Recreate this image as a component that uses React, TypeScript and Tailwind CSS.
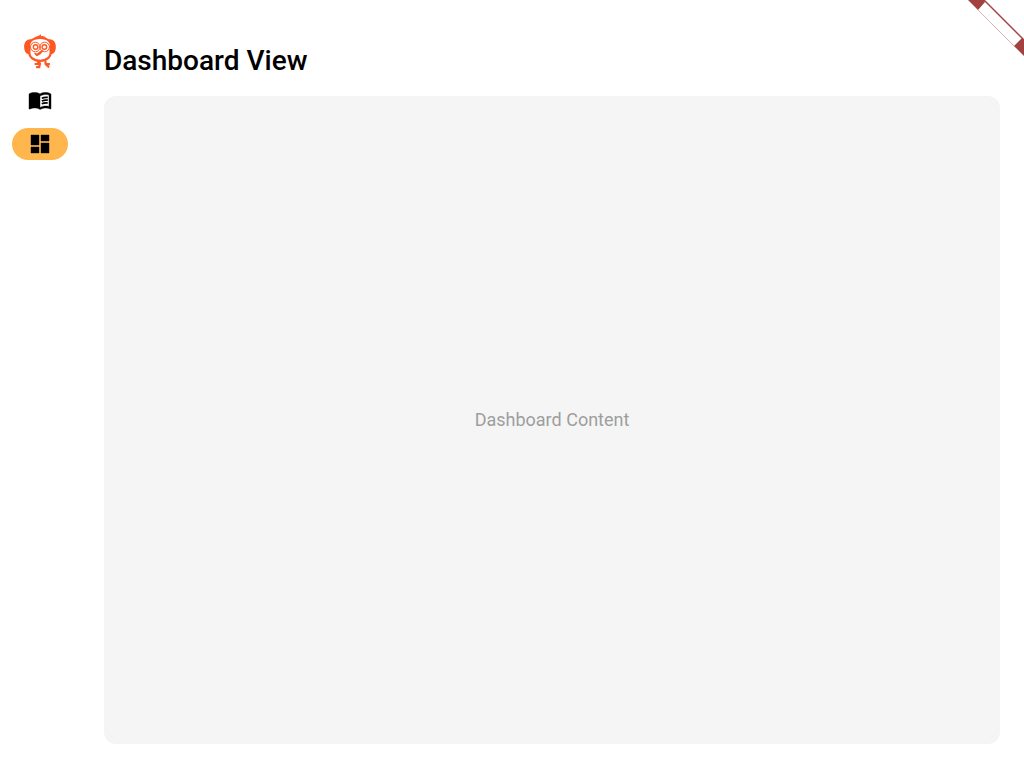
import { useState } from "react";

function Logo() {
  return (
    <svg viewBox="0 0 40 42" className="h-[42px] w-10" fill="none" stroke="#ff5722" strokeLinecap="round" strokeLinejoin="round" aria-hidden="true">
      <path d="M12 9.500C6.500 8.500 3.600 13 4.200 18C4.700 22 6.200 24.300 9.500 24.200C8.500 20 8.500 14 12 9.500Z" fill="#ff5722" stroke="none" />
      <path d="M28 9.500C33.500 8.500 36.400 13 35.800 18C35.300 22 33.800 24.300 30.500 24.200C31.500 20 31.500 14 28 9.500Z" fill="#ff5722" stroke="none" />
      <path d="M9.500 20C7.500 12 11.500 8 20 8S32.500 12 30.500 20C33.500 34.500 6.500 34.500 9.500 20Z" strokeWidth="2.200" />
      <path d="M14 8.500C15 6 18 6.800 21 4.200C21.200 5.400 21 6 20.700 6.400C23 5.600 25 6.400 26 8.500Z" fill="#ff5722" stroke="none" />
      <circle cx="15.300" cy="17" r="4.800" strokeWidth="1" />
      <circle cx="24.700" cy="17" r="4.800" strokeWidth="1" />
      <circle cx="15.600" cy="17" r="2.300" strokeWidth="1.400" />
      <circle cx="24.400" cy="17" r="2.300" strokeWidth="1.400" />
      <path d="M23.500 20C20.500 20.500 18.500 22 17.200 23.500L14 22.800C14.800 24.500 15.500 25.600 16.500 26.200C18.500 25.800 22 24 23.500 20Z" fill="#ff5722" stroke="none" />
      <path d="M18 32L20 33.500L19.200 37.200L17 37.200M19.500 34L15.500 34M25.500 31.500L25.500 34L28.500 36.800M26 34L29 34.200" strokeWidth="2.200" />
    </svg>
  );
}

function BookIcon({ className }: { className?: string }) {
  return (
    <svg viewBox="0 0 24 24" className={className} fill="currentColor" aria-hidden="true">
      <path
        fillRule="evenodd"
        stroke="currentColor"
        strokeWidth="0.400"
        d="M21 5c-1.110-.350-2.330-.500-3.500-.500-1.950 0-4.050.400-5.500 1.500-1.450-1.100-3.550-1.500-5.500-1.500S2.450 4.900 1 6v14.650c0 .250.250.500.500.500.100 0 .150-.050.250-.050C3.100 20.450 5.050 20 6.500 20c1.950 0 4.050.400 5.500 1.500 1.350-.850 3.800-1.500 5.500-1.500 1.650 0 3.350.300 4.750 1.050.100.050.150.050.250.050.250 0 .500-.250.500-.500V6c-.600-.450-1.250-.750-2-1zm0 13.500c-1.100-.350-2.300-.500-3.500-.500-1.700 0-4.150.650-5.500 1.500V8c1.350-.850 3.800-1.500 5.500-1.500 1.200 0 2.400.150 3.500.500v11.500z"
      />
      <path
        d="M13.800 10.200Q16.500 9 19.800 9.400M13.800 13Q16.500 11.800 19.800 12.200M13.800 15.800Q16.500 14.600 19.800 15"
        fill="none"
        stroke="currentColor"
        strokeWidth="1.700"
      />
    </svg>
  );
}

function DashboardIcon({ className }: { className?: string }) {
  return (
    <svg viewBox="0 0 24 24" className={className} fill="currentColor" stroke="currentColor" strokeWidth="0.400" aria-hidden="true">
      <path d="M3 13h8V3H3v10zm0 8h8v-6H3v6zm10 0h8V11h-8v10zm0-18v6h8V3h-8z" />
    </svg>
  );
}

function CornerRibbon() {
  return (
    <svg viewBox="0 0 56 56" className="pointer-events-none absolute top-0 right-0 size-14" aria-hidden="true">
      <path d="M0 0H16L17 2L10 10Z" fill="#a34040" />
      <path d="M54 38L56 40V56L46 46Z" fill="#a34040" />
      <path d="M16 0L56 40" stroke="#a34040" strokeWidth="1.400" />
      <path d="M10 10L46 46" stroke="#d8b4b4" strokeWidth="1" />
      <path d="M18 18L25 11M27 27L34 20M36 36L43 29" stroke="#f5eeee" strokeWidth="0.700" />
    </svg>
  );
}

const views = [
  { name: "Catalog", Icon: BookIcon },
  { name: "Dashboard", Icon: DashboardIcon },
];

export default function App() {
  const [active, setActive] = useState("Dashboard");
  return (
    <div className="relative flex min-h-screen overflow-hidden bg-white font-['Roboto',sans-serif] text-black">
      <nav className="flex w-20 shrink-0 flex-col items-center pt-[30px]" aria-label="Main">
        <Logo />
        <div className="mt-3 flex flex-col gap-3">
          {views.map(({ name, Icon }) => (
            <button
              key={name}
              type="button"
              aria-label={name}
              aria-current={active === name ? "page" : undefined}
              onClick={() => setActive(name)}
              className={`flex h-8 w-14 items-center justify-center rounded-full ${active === name ? "bg-[#ffb74d]" : ""}`}
            >
              <Icon className="size-6" />
            </button>
          ))}
        </div>
      </nav>
      <main className="flex flex-1 flex-col gap-3.5 p-6">
        <h1 className="pt-4 text-[28px] leading-[42px] font-medium">{active} View</h1>
        <section className="flex flex-1 items-center justify-center rounded-xl bg-[#f5f5f5]">
          <p className="text-lg text-[#9e9e9e]">{active} Content</p>
        </section>
      </main>
      <CornerRibbon />
    </div>
  );
}
